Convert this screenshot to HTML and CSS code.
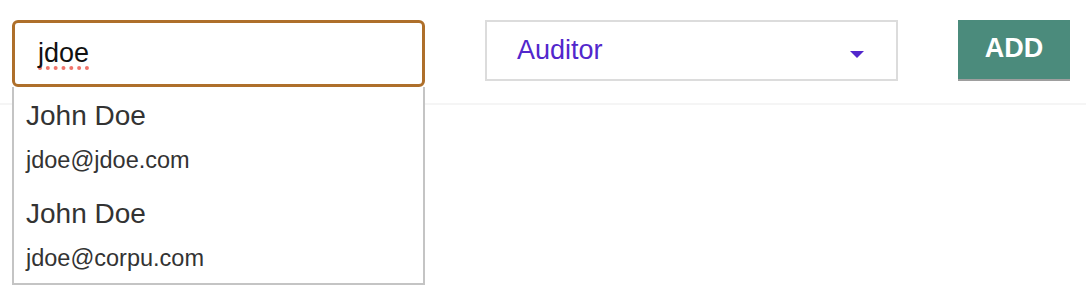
FILE: index.html
```html
<!DOCTYPE html>
<html lang="en">
<head>
<meta charset="utf-8">
<title>Add member</title>
<link rel="stylesheet" href="styles.css">
</head>
<body>
<div class="page">
  <div class="toolbar">
    <div class="search">
      <div class="field"><span class="typed">jdoe</span></div>
      <ul class="suggestions">
        <li class="suggestion">
          <div class="s-name">John Doe</div>
          <div class="s-email">jdoe@jdoe.com</div>
        </li>
        <li class="suggestion">
          <div class="s-name">John Doe</div>
          <div class="s-email">jdoe@corpu.com</div>
        </li>
      </ul>
    </div>
    <div class="select">
      <span class="select-value">Auditor</span>
      <span class="caret"></span>
    </div>
    <button class="add-btn" type="button">ADD</button>
  </div>
</div>
</body>
</html>
```

FILE: styles.css
```css
html, body {
  margin: 0;
  padding: 0;
  background: #ffffff;
  font-family: "Liberation Sans", Arial, sans-serif;
}

.page {
  min-height: 306px;
}

.toolbar {
  display: flex;
  align-items: flex-start;
  gap: 60px;
  box-sizing: border-box;
  height: 105px;
  padding: 20px 0 0 12px;
  border-bottom: 2px solid #f5f5f5;
}

.search {
  position: relative;
  width: 413px;
}

.field {
  box-sizing: border-box;
  width: 413px;
  height: 67px;
  border: 3px solid #ae6f2a;
  border-radius: 6px;
  padding-left: 23px;
  display: flex;
  align-items: center;
  font-size: 27px;
  color: #111111;
  background: #ffffff;
}

.typed {
  text-decoration-line: underline;
  text-decoration-style: dotted;
  text-decoration-color: #f0736a;
  text-decoration-thickness: 4px;
  text-underline-offset: 4px;
  text-decoration-skip-ink: none;
}

.suggestions {
  position: absolute;
  top: 67px;
  left: 0;
  z-index: 2;
  box-sizing: border-box;
  width: 413px;
  margin: 0;
  padding: 0;
  list-style: none;
  background: #ffffff;
  border: 2px solid #c4c4c4;
  border-top: none;
}

.suggestion {
  display: flex;
  flex-direction: column;
  gap: 13px;
  padding: 13px 12px 10px 12px;
  color: #333333;
}

.s-name {
  font-size: 28px;
  line-height: 32px;
}

.s-email {
  font-size: 23.5px;
  line-height: 30px;
}

.select {
  box-sizing: border-box;
  width: 413px;
  height: 61px;
  border: 2px solid #dcdcdc;
  display: flex;
  align-items: center;
  justify-content: space-between;
  padding: 0 32px 0 30px;
  color: #5227cc;
  font-size: 27px;
}

.select-value {
  line-height: 30px;
  margin-top: -2px;
}

.caret {
  width: 0;
  height: 0;
  border-left: 7px solid transparent;
  border-right: 7px solid transparent;
  border-top: 7px solid #5227cc;
  margin-top: 7px;
}

.add-btn {
  box-sizing: border-box;
  width: 112px;
  height: 61px;
  margin: 0;
  padding: 0 0 2px 0;
  border: none;
  border-bottom: 2px solid #9e9e9e;
  background: #4b8b7c;
  color: #ffffff;
  font-family: "Liberation Sans", Arial, sans-serif;
  font-size: 27px;
  font-weight: bold;
  cursor: pointer;
}
```
